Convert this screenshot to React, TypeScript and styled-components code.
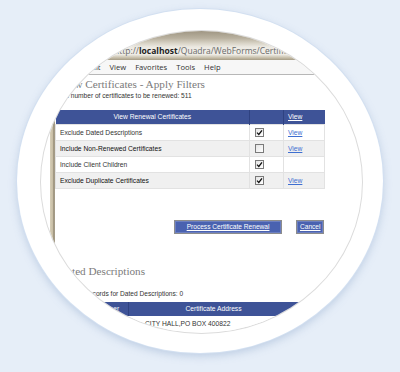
import styled, { createGlobalStyle } from "styled-components";

const GlobalStyle = createGlobalStyle`
  html, body {
    margin: 0;
    padding: 0;
  }
  body {
    background: #e6eef8;
    font-family: "Liberation Sans", Arial, sans-serif;
  }
`;

const Stage = styled.div`
  width: 400px;
  height: 372px;
  box-sizing: border-box;
  padding-bottom: 10px;
  display: flex;
  align-items: center;
  justify-content: center;
`;

const Ring = styled.div`
  width: 366px;
  height: 344px;
  box-sizing: border-box;
  padding: 2px 0 0 3px;
  border-radius: 50%;
  background: #fff;
  box-shadow: 0 0 0 1px #d3e0f1, 0 3px 8px rgba(110, 140, 185, 0.35);
  display: flex;
  align-items: center;
  justify-content: center;
`;

const Lens = styled.div`
  width: 323px;
  height: 304px;
  box-sizing: border-box;
  border: 1px solid #dcdcdc;
  border-radius: 50%;
  overflow: hidden;
  background: #fff;
`;

const TitleBar = styled.div`
  height: 29px;
  display: flex;
  align-items: flex-end;
  background: linear-gradient(180deg, #9f9683 0%, #b9b19f 25%, #d8d3c6 42%, #ece9e2 55%, #f1efe9 80%, #c7bfab 92%, #a59b85 100%);
`;

const Address = styled.div`
  flex: 1;
  height: 13px;
  margin-bottom: 3px;
  padding-left: 73px;
  font-family: "Open Sans", "Noto Sans", sans-serif;
  font-size: 8.5px;
  line-height: 13px;
  color: #6a6a6a;
  white-space: nowrap;
  b {
    color: #222;
    font-weight: 700;
  }
`;

const MenuBar = styled.div`
  height: 14px;
  display: flex;
  align-items: center;
  gap: 9px;
  padding-left: 25px;
  background: #f7f7f7;
  border-bottom: 1px solid #b7b7b7;
  font-family: "Open Sans", "Noto Sans", sans-serif;
  font-size: 7.6px;
  color: #333;
`;

const Body = styled.div`
  display: flex;
  padding-left: 9px;
  height: 260px;
`;

const FrameEdge = styled.div`
  width: 5px;
  background: linear-gradient(90deg, #d6ceb8 0%, #c9bfa6 50%, #8f8672 80%, #b8af99 100%);
`;

const Content = styled.div`
  flex: 1;
  min-width: 0;
`;

const Heading = styled.h2<{ $top: number }>`
  margin: ${(p) => p.$top}px 0 0 4px;
  font-family: "Liberation Serif", "DejaVu Serif", serif;
  font-weight: 400;
  font-size: 11.2px;
  line-height: 14px;
  color: #7b7b7b;
  white-space: nowrap;
`;

const Note = styled.div<{ $indent: number; $top: number }>`
  margin: ${(p) => p.$top}px 0 0 ${(p) => p.$indent}px;
  font-size: 6.6px;
  line-height: 9px;
  color: #333;
  white-space: nowrap;
`;

const Grid = styled.table<{ $top: number; $width: number }>`
  margin-top: ${(p) => p.$top}px;
  width: ${(p) => p.$width}px;
  border-collapse: collapse;
  table-layout: fixed;
  font-size: 6.7px;
`;

const Head = styled.th<{ $w?: number; $align?: string }>`
  box-sizing: border-box;
  width: ${(p) => (p.$w ? `${p.$w}px` : "auto")};
  height: 14px;
  padding: 0 4px;
  background: #3e5397;
  color: #fff;
  font-weight: 400;
  text-align: ${(p) => p.$align ?? "center"};
  border-left: 1px solid #2f4281;
  white-space: nowrap;
  &:first-child {
    border-left: none;
  }
  a {
    color: #fff;
    text-decoration: underline;
  }
`;

const Row = styled.tr<{ $alt?: boolean }>`
  background: ${(p) => (p.$alt ? "#f0f0f0" : "#fff")};
  color: ${(p) => (p.$alt ? "#111" : "#333")};
`;

const Cell = styled.td<{ $bare?: boolean; $indent?: number }>`
  height: 15px;
  padding: 0 4px 0 ${(p) => p.$indent ?? 4}px;
  border: ${(p) => (p.$bare ? "none" : "1px solid #e2e2e2")};
  white-space: nowrap;
  overflow: hidden;
`;

const Link = styled.a`
  color: #3e6fd0;
  text-decoration: underline;
`;

const Box = styled.span`
  display: inline-flex;
  align-items: center;
  justify-content: center;
  width: 7px;
  height: 7px;
  margin-left: 1px;
  border: 1px solid #7a7a7a;
  background: linear-gradient(135deg, #e4e4e4, #fff);
  vertical-align: middle;
`;

const Actions = styled.div`
  width: 269px;
  display: flex;
  justify-content: flex-end;
  gap: 14px;
  margin-top: 31px;
`;

const Button = styled.button<{ $pad: number }>`
  height: 14px;
  padding: 0 ${(p) => p.$pad}px;
  border: 1px solid #8c8c8c;
  box-shadow: inset 0 0 0 1px #6c7fc0;
  background: #4a62b0;
  color: #fff;
  font-family: "Liberation Sans", Arial, sans-serif;
  font-size: 6.6px;
  text-decoration: underline;
  cursor: pointer;
`;

function Check({ on }: { on: boolean }) {
  return (
    <Box>
      {on && (
        <svg width="7" height="7" viewBox="0 0 7 7">
          <path d="M1 3.6 L2.8 5.4 L6 1.3" fill="none" stroke="#111" strokeWidth="1.3" />
        </svg>
      )}
    </Box>
  );
}

const filters = [
  { label: "Exclude Dated Descriptions", on: true, view: true },
  { label: "Include Non-Renewed Certificates", on: false, view: true },
  { label: "Include Client Children", on: true, view: false },
  { label: "Exclude Duplicate Certificates", on: true, view: true },
];

export default function App() {
  return (
    <>
      <GlobalStyle />
      <Stage>
        <Ring>
          <Lens>
            <TitleBar>
              <Address>
                http://<b>localhost</b>/Quadra/WebForms/CertificateRenewal.aspx
              </Address>
            </TitleBar>
            <MenuBar>
              <span>File</span>
              <span>Edit</span>
              <span>View</span>
              <span>Favorites</span>
              <span>Tools</span>
              <span>Help</span>
            </MenuBar>
            <Body>
              <FrameEdge />
              <Content>
                <Heading $top={2}>View Certificates - Apply Filters</Heading>
                <Note $indent={0} $top={0}>Total number of certificates to be renewed: 511</Note>
                <Grid $top={10} $width={270}>
                  <thead>
                    <tr>
                      <Head>View Renewal Certificates</Head>
                      <Head $w={34}></Head>
                      <Head $w={41} $align="left">
                        <a>View</a>
                      </Head>
                    </tr>
                  </thead>
                  <tbody>
                    {filters.map((f, i) => (
                      <Row key={f.label} $alt={i % 2 === 1}>
                        <Cell>{f.label}</Cell>
                        <Cell>
                          <Check on={f.on} />
                        </Cell>
                        <Cell>{f.view && <Link>View</Link>}</Cell>
                      </Row>
                    ))}
                  </tbody>
                </Grid>
                <Actions>
                  <Button $pad={12}>Process Certificate Renewal</Button>
                  <Button $pad={2.5}>Cancel</Button>
                </Actions>
                <Heading $top={30}>Dated Descriptions</Heading>
                <Note $indent={16} $top={11}>Total records for Dated Descriptions: 0</Note>
                <Grid $top={4} $width={320}>
                  <thead>
                    <tr>
                      <Head $w={73}>Certificate Number</Head>
                      <Head $w={171}>Certificate Address</Head>
                      <Head></Head>
                    </tr>
                  </thead>
                  <tbody>
                    <Row>
                      <Cell $bare></Cell>
                      <Cell $bare $indent={17}>CITY HALL,PO BOX 400822</Cell>
                      <Cell $bare></Cell>
                    </Row>
                  </tbody>
                </Grid>
              </Content>
            </Body>
          </Lens>
        </Ring>
      </Stage>
    </>
  );
}
